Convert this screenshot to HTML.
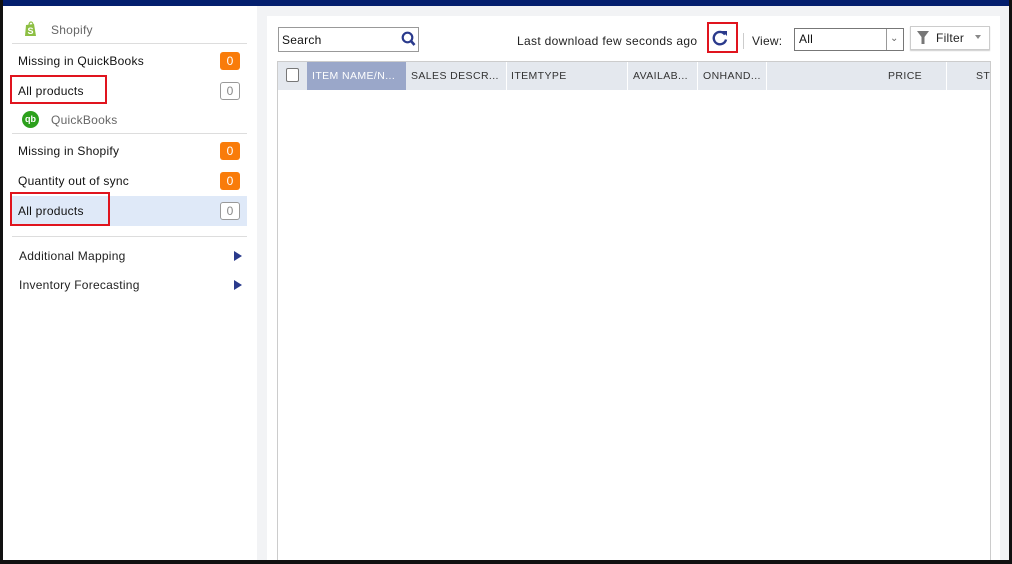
<!DOCTYPE html>
<html><head><style>
*{margin:0;padding:0;box-sizing:border-box}
body{width:1012px;height:564px;position:relative;overflow:hidden;background:#f2f3f5;font-family:"Liberation Sans",Verdana,sans-serif;font-size:12px;color:#111;letter-spacing:.25px}
.a{position:absolute}
.row{position:absolute;left:18px;font-size:12px}
.badge{position:absolute;left:220px;width:20px;height:18px;border-radius:3px;text-align:center;line-height:18px;font-size:12px;letter-spacing:0}
.o{background:#f97c0a;color:#fff}
.w{border:1px solid #999;color:#888;line-height:16px;background:#fff}
.red{position:absolute;border:2px solid #e0141e}
.th{position:absolute;top:62px;height:28px;line-height:28px;font-size:10.5px;color:#333;letter-spacing:.4px}
</style></head><body>
<div class="a" style="left:0;top:0;width:1012px;height:6px;background:#041f6e"></div>
<div class="a" style="left:0;top:0;width:3px;height:564px;background:#111"></div>
<div class="a" style="left:1009px;top:0;width:3px;height:564px;background:#111"></div>
<div class="a" style="left:0;top:560px;width:1012px;height:4px;background:#111"></div>
<div class="a" style="left:3px;top:6px;width:254px;height:554px;background:#fff"></div>
<svg class="a" style="left:24px;top:21px" width="14" height="16" viewBox="0 0 14 16"><path d="M2 4 L10 3 L12 15 L1 15 Z" fill="#8dbf43"/><path d="M5 4 C5 0 9 0 9 4" fill="none" stroke="#8dbf43" stroke-width="1.2"/><text x="3.5" y="13" font-size="9" fill="#fff" font-family="Liberation Sans" font-weight="bold">S</text></svg>
<div class="a" style="left:51px;top:23px;color:#666;font-size:12px">Shopify</div>
<div class="a" style="left:12px;top:43px;width:235px;height:1px;background:#ddd"></div>
<div class="row" style="top:54px">Missing in QuickBooks</div><div class="badge o" style="top:52px">0</div>
<div class="row" style="top:84px">All products</div><div class="badge w" style="top:82px">0</div>
<div class="red" style="left:10px;top:75px;width:97px;height:29px"></div>
<div class="a" style="left:22px;top:111px;width:17px;height:17px;border-radius:50%;background:#2ca01c;color:#fff;font-size:9px;font-weight:bold;text-align:center;line-height:17px;letter-spacing:0">qb</div>
<div class="a" style="left:51px;top:113px;color:#666;font-size:12px">QuickBooks</div>
<div class="a" style="left:12px;top:133px;width:235px;height:1px;background:#ddd"></div>
<div class="row" style="top:144px">Missing in Shopify</div><div class="badge o" style="top:142px">0</div>
<div class="row" style="top:174px">Quantity out of sync</div><div class="badge o" style="top:172px">0</div>
<div class="a" style="left:12px;top:196px;width:235px;height:30px;background:#dfe9f8"></div>
<div class="row" style="top:204px">All products</div><div class="badge w" style="top:202px">0</div>
<div class="red" style="left:10px;top:192px;width:100px;height:34px"></div>
<div class="a" style="left:12px;top:236px;width:235px;height:1px;background:#ddd"></div>
<div class="row" style="left:19px;top:249px;color:#222">Additional Mapping</div>
<div class="row" style="left:19px;top:278px;color:#222">Inventory Forecasting</div>
<div class="a" style="left:234px;top:251px;width:0;height:0;border-left:8px solid #2a3a8c;border-top:5px solid transparent;border-bottom:5px solid transparent"></div>
<div class="a" style="left:234px;top:280px;width:0;height:0;border-left:8px solid #2a3a8c;border-top:5px solid transparent;border-bottom:5px solid transparent"></div>
<div class="a" style="left:267px;top:16px;width:733px;height:544px;background:#fff"></div>
<div class="a" style="left:278px;top:27px;width:141px;height:25px;border:1px solid #999"></div>
<div class="a" style="left:282px;top:33px;font-size:12px">Search</div>
<svg class="a" style="left:401px;top:31px" width="15" height="16" viewBox="0 0 15 16"><circle cx="6.5" cy="6.5" r="4.8" fill="none" stroke="#2a3a8c" stroke-width="2.2"/><path d="M10 10 L13.5 14" stroke="#2a3a8c" stroke-width="2.6"/></svg>
<div class="a" style="left:517px;top:34px;font-size:12px;color:#222;letter-spacing:.33px">Last download few seconds ago</div>
<div class="red" style="left:707px;top:22px;width:31px;height:31px"></div>
<svg class="a" style="left:711px;top:29px" width="18" height="18" viewBox="0 0 18 18"><path d="M14 5.5 A6.2 6.2 0 1 0 15 10.5" fill="none" stroke="#2a3a8c" stroke-width="2.4"/><path d="M11 2 L16 2 L16 7 Z" fill="#2a3a8c"/></svg>
<div class="a" style="left:743px;top:33px;width:1px;height:16px;background:#ccc"></div>
<div class="a" style="left:752px;top:34px;font-size:12px;color:#222">View:</div>
<div class="a" style="left:794px;top:28px;width:110px;height:23px;border:1px solid #777"></div>
<div class="a" style="left:799px;top:32px;font-size:12px">All</div>
<div class="a" style="left:886px;top:29px;width:1px;height:21px;background:#999"></div>
<div class="a" style="left:890px;top:33px;font-size:10px;color:#666">&#8964;</div>
<div class="a" style="left:910px;top:26px;width:80px;height:24px;border:1px solid #ccc;box-shadow:0 1px 1px #ccc"></div>
<svg class="a" style="left:917px;top:31px" width="12" height="13" viewBox="0 0 12 13"><path d="M0 0 H12 L7.5 6 V13 H4.5 V6 Z" fill="#777"/></svg>
<div class="a" style="left:936px;top:31px;font-size:12px;color:#222">Filter</div>
<div class="a" style="left:975px;top:35px;width:0;height:0;border-top:4px solid #888;border-left:3px solid transparent;border-right:3px solid transparent"></div>
<div class="a" style="left:277px;top:61px;width:714px;height:499px;border:1px solid #ccc;border-bottom:none"></div>
<div class="a" style="left:278px;top:62px;width:712px;height:28px;background:#e4e8ee"></div>
<div class="a" style="left:307px;top:62px;width:99px;height:28px;background:#9aa7c9"></div>
<div class="a" style="left:286px;top:68px;width:13px;height:14px;border:1px solid #777;border-radius:2px;background:#fff"></div>
<div class="th" style="left:312px;color:#fff">ITEM NAME/N...</div>
<div class="th" style="left:411px">SALES DESCR...</div>
<div class="th" style="left:511px">ITEMTYPE</div>
<div class="th" style="left:633px">AVAILAB...</div>
<div class="th" style="left:703px">ONHAND...</div>
<div class="th" style="left:888px">PRICE</div>
<div class="th" style="left:976px">ST</div>
<div class="a" style="left:506px;top:62px;width:1px;height:28px;background:#fff"></div>
<div class="a" style="left:627px;top:62px;width:1px;height:28px;background:#fff"></div>
<div class="a" style="left:697px;top:62px;width:1px;height:28px;background:#fff"></div>
<div class="a" style="left:766px;top:62px;width:1px;height:28px;background:#fff"></div>
<div class="a" style="left:946px;top:62px;width:1px;height:28px;background:#fff"></div>
</body></html>
